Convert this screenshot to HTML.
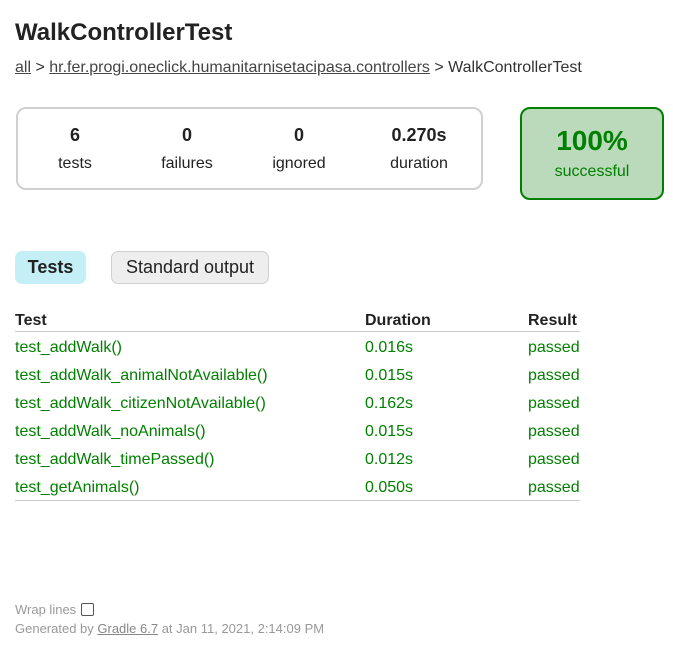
<!DOCTYPE html>
<html><head><meta charset="utf-8">
<style>
body{margin:0;font-family:"Liberation Sans",Arial,sans-serif;color:#222;background:#fff;width:673px;height:650px;position:relative;overflow:hidden;}
.a{position:absolute;}
h1{position:absolute;left:15px;top:19px;margin:0;font-size:24px;font-weight:bold;}
.bc{left:15px;top:59px;font-size:16px;color:#333;}
.bc a{color:#444;text-decoration:underline;}
.sum{left:16px;top:107px;width:463px;height:79px;border:2px solid #d0d0d0;border-radius:10px;}
.c{position:absolute;text-align:center;width:110px;}
.c b{display:block;font-size:18px;margin-top:16px;}
.c span{display:block;font-size:16px;margin-top:9px;}
.succ{left:520px;top:107px;width:140px;height:89px;border:2px solid #008000;border-radius:10px;background:#bbd9bb;color:#008000;text-align:center;}
.succ b{display:block;font-size:28px;margin-top:16px;}
.succ span{display:block;font-size:16px;margin-top:6px;}
.tab1{left:15px;top:251px;width:71px;height:33px;background:#c5eff6;border-radius:7px;font-weight:bold;font-size:18px;line-height:33px;text-align:center;}
.tab2{left:111px;top:251px;width:156px;height:31px;background:#eee;border:1px solid #d0d0d0;border-radius:7px;font-size:18px;line-height:31px;text-align:center;}
.row{position:absolute;left:15px;width:565px;font-size:16px;color:#008000;height:28px;}
.row div{position:absolute;top:2px;}
.hd{color:#222;font-weight:bold;border-bottom:1px solid #ccc;height:20px;}
.hd div{top:1px;}
.foot{left:15px;font-size:13px;color:#999;}
.foot a{color:#888;}
.cb{display:inline-block;width:11px;height:11px;border:1px solid #555;border-radius:2px;vertical-align:-2px;margin-left:5px;}
</style></head><body>
<h1>WalkControllerTest</h1>
<div class="a bc"><a>all</a> &gt; <a>hr.fer.progi.oneclick.humanitarnisetacipasa.controllers</a> &gt; WalkControllerTest</div>
<div class="a sum">
<div class="c" style="left:2px"><b>6</b><span>tests</span></div>
<div class="c" style="left:114px"><b>0</b><span>failures</span></div>
<div class="c" style="left:226px"><b>0</b><span>ignored</span></div>
<div class="c" style="left:346px"><b>0.270s</b><span>duration</span></div>
</div>
<div class="a succ"><b>100%</b><span>successful</span></div>
<div class="a tab1">Tests</div>
<div class="a tab2">Standard output</div>
<div class="row hd" style="top:311px"><div>Test</div><div style="left:350px">Duration</div><div style="left:513px">Result</div></div>
<div class="row" style="top:337px"><div>test_addWalk()</div><div style="left:350px">0.016s</div><div style="left:513px">passed</div></div>
<div class="row" style="top:365px"><div>test_addWalk_animalNotAvailable()</div><div style="left:350px">0.015s</div><div style="left:513px">passed</div></div>
<div class="row" style="top:393px"><div>test_addWalk_citizenNotAvailable()</div><div style="left:350px">0.162s</div><div style="left:513px">passed</div></div>
<div class="row" style="top:421px"><div>test_addWalk_noAnimals()</div><div style="left:350px">0.015s</div><div style="left:513px">passed</div></div>
<div class="row" style="top:449px"><div>test_addWalk_timePassed()</div><div style="left:350px">0.012s</div><div style="left:513px">passed</div></div>
<div class="row" style="top:477px;border-bottom:1px solid #ccc;height:23px"><div>test_getAnimals()</div><div style="left:350px">0.050s</div><div style="left:513px">passed</div></div>
<div class="a foot" style="top:602px">Wrap lines<span class="cb"></span></div>
<div class="a foot" style="top:621px">Generated by <a style="text-decoration:underline">Gradle 6.7</a> at Jan 11, 2021, 2:14:09 PM</div>
</body></html>
